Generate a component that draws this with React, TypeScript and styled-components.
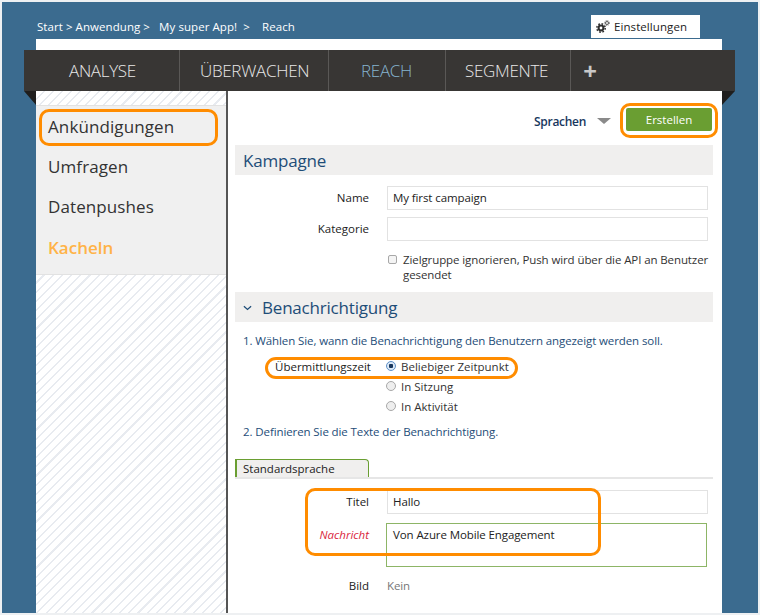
import React from "react";
import styled, { createGlobalStyle } from "styled-components";

const GlobalStyle = createGlobalStyle`
    html, body { margin: 0; padding: 0; background: #fff; }
    * { box-sizing: border-box; }
`;

const FONT = `"Open Sans", "Noto Sans", "Liberation Sans", sans-serif`;
const BLUE = "#3b6b8f";
const NAVY = "#1e4d78";
const ORANGE = "#ff8c00";

const tabs = [
    { label: "ANALYSE", width: 156, pad: 45 },
    { label: "ÜBERWACHEN", width: 149, pad: 20 },
    { label: "REACH", width: 117, pad: 32, active: true },
    { label: "SEGMENTE", width: 125, pad: 19 },
];

const menu = [
    { label: "Ankündigungen" },
    { label: "Umfragen" },
    { label: "Datenpushes" },
    { label: "Kacheln", active: true },
];

function GearsIcon() {
    return (
        <svg width="14" height="13" viewBox="0 0 14 13" aria-hidden="true">
            <circle cx="5" cy="8" r="2.4" fill="none" stroke="#2e2e2e" strokeWidth="2" />
            <circle cx="5" cy="8" r="4.2" fill="none" stroke="#2e2e2e" strokeWidth="1.5" strokeDasharray="1.7 1.6" />
            <circle cx="11" cy="3" r="1.5" fill="none" stroke="#555" strokeWidth="1" />
            <circle cx="11" cy="3" r="2.5" fill="none" stroke="#555" strokeWidth="0.8" strokeDasharray="1 1" />
        </svg>
    );
}

export default function App() {
    return (
        <Page>
            <GlobalStyle />
            <TopStrip>
                <Crumbs>Start &gt; Anwendung &gt;&nbsp;&nbsp; My super App! &nbsp;&gt;&nbsp;&nbsp;&nbsp; Reach</Crumbs>
                <SettingsTab>
                    <GearsIcon />
                    Einstellungen
                </SettingsTab>
            </TopStrip>

            <Sheet>
                <NavBar>
                    {tabs.map((t) => (
                        <NavTab key={t.label} $width={t.width} $pad={t.pad} $active={t.active}>{t.label}</NavTab>
                    ))}
                    <PlusTab>+</PlusTab>
                </NavBar>
                <Columns>
                    <Sidebar>
                        <Menu>
                            {menu.map((m) => (
                                <MenuItem key={m.label} $active={m.active}>{m.label}</MenuItem>
                            ))}
                        </Menu>
                    </Sidebar>
                    <Main>
                        <ActionRow>
                            <LangLabel>Sprachen</LangLabel>
                            <LangCaret />
                            <CreateButton>Erstellen</CreateButton>
                        </ActionRow>

                        <SectionHead>Kampagne</SectionHead>
                        <Form>
                            <Row>
                                <Label>Name</Label>
                                <Field>My first campaign</Field>
                            </Row>
                            <Row>
                                <Label>Kategorie</Label>
                                <Field />
                            </Row>
                            <CheckRow>
                                <Check />
                                <CheckText>Zielgruppe ignorieren, Push wird über die API an Benutzer gesendet</CheckText>
                            </CheckRow>
                        </Form>

                        <SectionHead>
                            <Chevron viewBox="0 0 10 6" width="9" height="6">
                                <path d="M1 1l4 3.6L9 1" fill="none" stroke="#1e4d78" strokeWidth="1.4" />
                            </Chevron>
                            Benachrichtigung
                        </SectionHead>
                        <Step>1. Wählen Sie, wann die Benachrichtigung den Benutzern angezeigt werden soll.</Step>
                        <RadioBlock>
                            <RadioLabel>Übermittlungszeit</RadioLabel>
                            <RadioList>
                                <RadioRow><Radio $on />Beliebiger Zeitpunkt</RadioRow>
                                <RadioRow><Radio />In Sitzung</RadioRow>
                                <RadioRow><Radio />In Aktivität</RadioRow>
                            </RadioList>
                        </RadioBlock>
                        <Step2>2. Definieren Sie die Texte der Benachrichtigung.</Step2>

                        <TabStrip>
                            <LangTab>Standardsprache</LangTab>
                        </TabStrip>
                        <Form2>
                            <Row>
                                <Label>Titel</Label>
                                <Field>Hallo</Field>
                            </Row>
                            <Row>
                                <Label $required>Nachricht</Label>
                                <Area>Von Azure Mobile Engagement</Area>
                            </Row>
                            <ImageRow>
                                <Label>Bild</Label>
                                <Muted>Kein</Muted>
                            </ImageRow>
                        </Form2>
                    </Main>
                </Columns>
            </Sheet>

            <Callout $x={39} $y={109} $w={179} $h={37} />
            <Callout $x={620} $y={103} $w={98} $h={35} />
            <Callout $x={265} $y={357} $w={253} $h={22} $r={11} />
            <Callout $x={305} $y={488} $w={296} $h={68} />
        </Page>
    );
}

const Page = styled.div`
    position: relative;
    width: 760px;
    height: 615px;
    overflow: hidden;
    background: ${BLUE};
    border: 2px solid #eef0f2;
    font-family: ${FONT};
    display: flex;
    flex-direction: column;
    align-items: flex-start;
`;

const TopStrip = styled.div`
    width: 686px;
    height: 37px;
    margin-left: 34px;
    display: flex;
    justify-content: space-between;
    align-items: flex-end;
`;

const Crumbs = styled.div`
    color: #fff;
    font-size: 11.5px;
    letter-spacing: 0.06px;
    line-height: 16px;
    padding: 0 0 4px 1px;
`;

const SettingsTab = styled.div`
    width: 109px;
    height: 23px;
    margin: 0 22px 1px 0;
    background: #fff;
    color: #222;
    font-size: 11.5px;
    letter-spacing: 0.08px;
    display: flex;
    align-items: center;
    gap: 4px;
    padding-left: 5px;
`;

const Sheet = styled.div`
    width: 686px;
    height: 574px;
    margin-left: 34px;
    background: #fff;
    padding-top: 11px;
    display: flex;
    flex-direction: column;
`;

const NavBar = styled.div`
    position: relative;
    height: 41px;
    margin: 0 -13px 0 -12px;
    background: #383634;
    display: flex;
    flex-shrink: 0;
    z-index: 2;
    &::before, &::after {
        content: "";
        position: absolute;
        top: 41px;
        width: 0;
        height: 0;
        border-style: solid;
    }
    &::before {
        left: 0;
        border-width: 14px 0 0 12px;
        border-color: #1f1e1d transparent transparent transparent;
    }
    &::after {
        right: 0;
        border-width: 14px 13px 0 0;
        border-color: #1f1e1d transparent transparent transparent;
    }
`;

const NavTab = styled.div<{ $width: number; $pad: number; $active?: boolean }>`
    width: ${(p) => p.$width}px;
    padding-left: ${(p) => p.$pad}px;
    border-right: 1px solid #5a5856;
    color: ${(p) => (p.$active ? "#86b4cf" : "#e8e8e8")};
    font-size: 17px;
    font-weight: 300;
    letter-spacing: -0.3px;
    display: flex;
    align-items: center;
`;

const PlusTab = styled.div`
    width: 38px;
    color: #c8c8c8;
    font-size: 24px;
    font-weight: 700;
    display: flex;
    align-items: center;
    justify-content: center;
`;

const Columns = styled.div`
    flex: 1;
    min-height: 0;
    display: flex;
`;

const Sidebar = styled.div`
    width: 192px;
    flex-shrink: 0;
    padding-top: 14px;
    border-right: 2px solid #555;
    background: repeating-linear-gradient(135deg, #fff 0 5px, #e8ebf0 5px 6.5px);
`;

const Menu = styled.div`
    height: 170px;
    background: #f0f0f0;
    border-top: 1px solid #e2e2e2;
    border-bottom: 1px solid #e2e2e2;
    padding: 1px 0 0 12px;
`;

const MenuItem = styled.div<{ $active?: boolean }>`
    height: 40.2px;
    line-height: 40px;
    font-size: 17px;
    letter-spacing: ${(p) => (p.$active ? "0" : "0.1px")};
    color: ${(p) => (p.$active ? "#ffb347" : "#333")};
    font-weight: ${(p) => (p.$active ? 600 : 400)};
`;

const Main = styled.div`
    flex: 1;
    padding: 0 9px 0 7px;
    min-width: 0;
`;

const ActionRow = styled.div`
    height: 54px;
    display: flex;
    align-items: center;
    justify-content: flex-end;
    padding: 3px 1px 0 0;
`;

const LangLabel = styled.div`
    color: #17375e;
    font-size: 12px;
    font-weight: 600;
    letter-spacing: -0.3px;
    margin-top: 3px;
`;

const LangCaret = styled.div`
    width: 0;
    height: 0;
    margin: 2px 15px 0 11px;
    border-style: solid;
    border-width: 6px 7px 0 7px;
    border-color: #8a8a8a transparent transparent transparent;
`;

const CreateButton = styled.div`
    width: 86px;
    height: 23px;
    background: #6a9e32;
    border-radius: 2px;
    color: #fff;
    font-size: 11.5px;
    letter-spacing: 0;
    display: flex;
    align-items: center;
    justify-content: center;
`;

const SectionHead = styled.div`
    height: 30px;
    background: #f0efee;
    color: ${NAVY};
    font-size: 17px;
    letter-spacing: -0.2px;
    display: flex;
    align-items: center;
    padding-left: 8px;
`;

const Chevron = styled.svg`
    margin: 2px 10px 0 0;
`;

const Form = styled.div`
    height: 117px;
    padding-top: 11px;
    display: flex;
    flex-direction: column;
    gap: 7px;
`;

const Form2 = styled.div`
    padding-top: 11px;
    display: flex;
    flex-direction: column;
    gap: 9px;
`;

const Row = styled.div`
    display: flex;
    align-items: flex-start;
`;

const Label = styled.div<{ $required?: boolean }>`
    width: 134px;
    margin-right: 18px;
    flex-shrink: 0;
    text-align: right;
    font-size: 11.5px;
    letter-spacing: 0;
    line-height: 24px;
    color: ${(p) => (p.$required ? "#d9263c" : "#222")};
    font-style: ${(p) => (p.$required ? "italic" : "normal")};
`;

const Field = styled.div`
    width: 321px;
    height: 24px;
    border: 1px solid #e2e2e2;
    color: #222;
    font-size: 11.5px;
    letter-spacing: -0.1px;
    line-height: 22px;
    padding-left: 5px;
`;

const Area = styled.div`
    width: 321px;
    height: 44px;
    margin-left: -1px;
    border: 1px solid #8db566;
    color: #222;
    font-size: 11.5px;
    letter-spacing: -0.1px;
    line-height: 22px;
    padding-left: 6px;
`;

const CheckRow = styled.div`
    display: flex;
    padding: 4px 0 0 153px;
    gap: 6px;
`;

const Check = styled.div`
    width: 9px;
    height: 9px;
    margin-top: 3px;
    flex-shrink: 0;
    border: 1px solid #a8a8a8;
    border-radius: 2px;
    background: #f4f4f4;
`;

const CheckText = styled.div`
    width: 310px;
    color: #333;
    font-size: 11.5px;
    letter-spacing: -0.1px;
    line-height: 15px;
`;

const Step = styled.div`
    color: ${NAVY};
    font-size: 11.5px;
    letter-spacing: -0.1px;
    line-height: 16px;
    padding: 11px 0 0 8px;
`;

const Step2 = styled(Step)`
    padding-top: 8px;
`;

const RadioBlock = styled.div`
    display: flex;
    padding: 8px 0 0 40px;
`;

const RadioLabel = styled.div`
    width: 111px;
    color: #222;
    font-size: 11.5px;
    letter-spacing: 0;
    line-height: 20px;
`;

const RadioList = styled.div`
    display: flex;
    flex-direction: column;
    margin-top: -1px;
`;

const RadioRow = styled.div`
    height: 20px;
    display: flex;
    align-items: center;
    gap: 5px;
    color: #333;
    font-size: 11.5px;
    letter-spacing: 0;
`;

const Radio = styled.span<{ $on?: boolean }>`
    width: 10px;
    height: 10px;
    border-radius: 50%;
    border: 1px solid ${(p) => (p.$on ? "#5b8fc7" : "#a8a8a8")};
    background: ${(p) => (p.$on ? "radial-gradient(circle, #17375e 0 2px, #dbe8f6 2.5px)" : "#eee")};
`;

const TabStrip = styled.div`
    height: 29px;
    margin-top: 10px;
    display: flex;
    align-items: flex-end;
    border-bottom: 2px solid #e6e6e6;
`;

const LangTab = styled.div`
    width: 134px;
    height: 18px;
    background: #f0efee;
    border-top: 1px solid #6a9e32;
    border-right: 1px solid #6a9e32;
    border-left: 2px solid #6a9e32;
    border-top-right-radius: 4px;
    color: #222;
    font-size: 11.5px;
    letter-spacing: 0;
    line-height: 17px;
    padding-left: 6px;
`;

const ImageRow = styled.div`
    display: flex;
    margin-top: -2px;
`;

const Muted = styled.div`
    color: #777;
    font-size: 11.5px;
    letter-spacing: -0.1px;
    line-height: 24px;
`;

// the orange marks drawn on top of the screenshot
const Callout = styled.div<{ $x: number; $y: number; $w: number; $h: number; $r?: number }>`
    position: absolute;
    left: ${(p) => p.$x - 2}px;
    top: ${(p) => p.$y - 2}px;
    width: ${(p) => p.$w}px;
    height: ${(p) => p.$h}px;
    border: 3px solid ${ORANGE};
    border-radius: ${(p) => p.$r ?? 10}px;
    z-index: 5;
`;
